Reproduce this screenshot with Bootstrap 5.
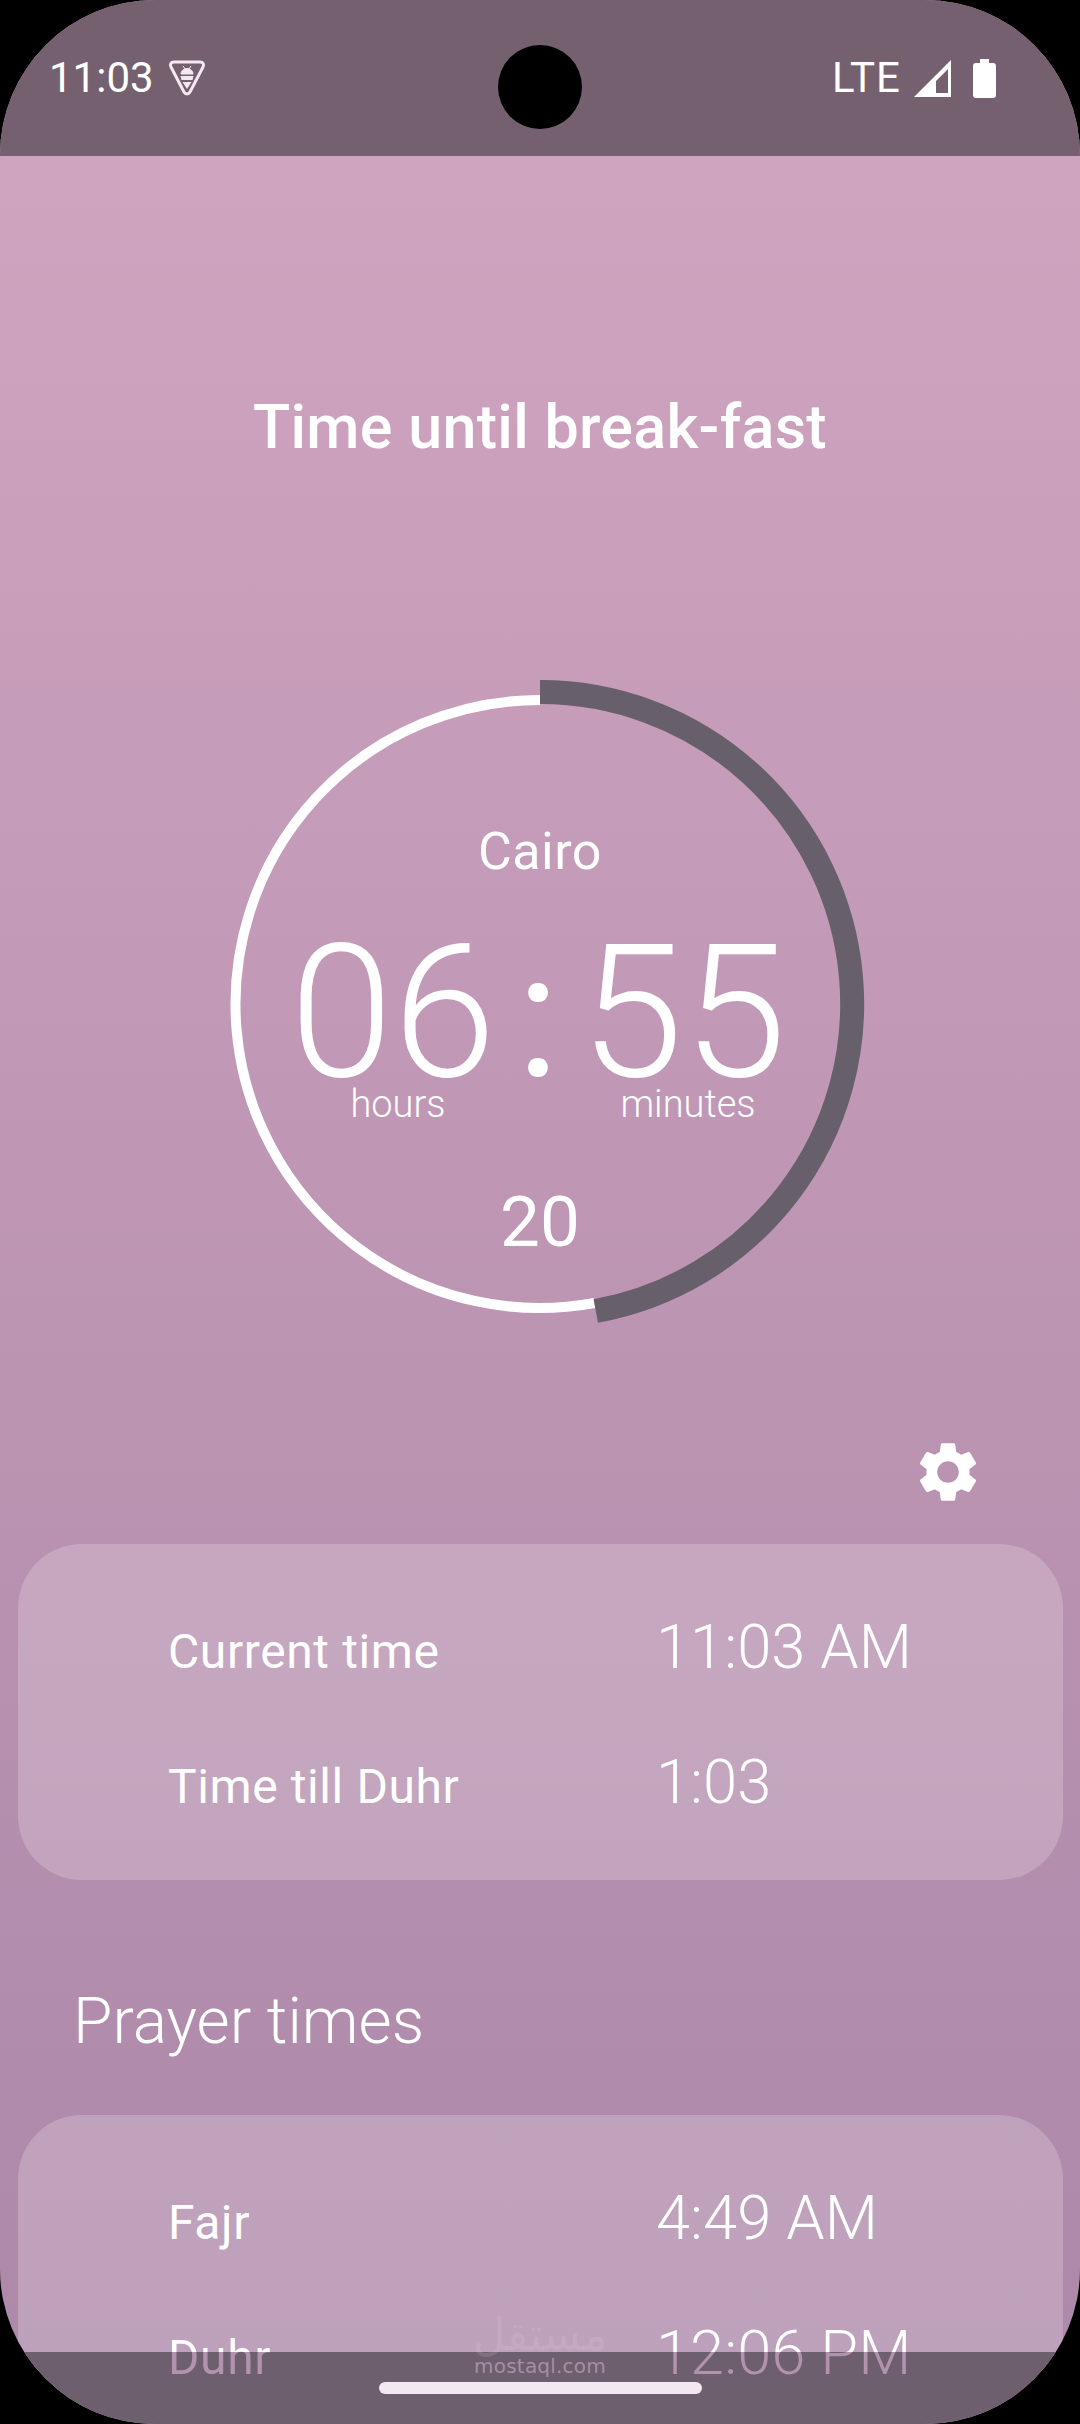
<!DOCTYPE html>
<html lang="en">
<head>
  <meta charset="UTF-8" />
  <meta name="viewport" content="width=device-width, initial-scale=1" />
  <title>Prayer Times</title>
  <link href="https://cdn.jsdelivr.net/npm/bootstrap@5.3.0/dist/css/bootstrap.min.css" rel="stylesheet">
  <style>
    html, body { height: 100%; background: #000; }
    body { font-family: Roboto, "Liberation Sans", sans-serif; color: #fff; }

    .phone-screen {
      position: relative;
      height: 2424px;
      border-radius: 155px;
      overflow: hidden;
      background: linear-gradient(180deg, #cfa4bf 156px, #b08bab 2100px, #ad89aa 2424px);
    }

    /* status bar */
    .status-bar { height: 156px; background: #75606f; padding: 0 84px 0 49px; }
    .status-clock { font-size: 42px; line-height: 1; }
    .status-net { font-size: 42px; line-height: 1; letter-spacing: 1px; }
    .status-left { gap: 14px; }
    .signal-icon { margin-left: 13px; }
    .battery-icon { margin-left: 22px; }
    .camera-hole { position: absolute; top: 45px; left: 498px; width: 84px; height: 84px; border-radius: 50%; background: #000; }

    .page-title { margin: 0; padding-top: 238px; font-size: 61px; line-height: 66px; font-weight: 500; text-align: center; letter-spacing: .3px; }

    /* countdown ring, svg and text share one grid cell */
    .ring-box { display: grid; width: 660px; height: 660px; margin: 214px auto 0; }
    .ring-box > * { grid-area: 1 / 1; }
    .ring-text { padding-top: 148px; }
    .ring-city { font-size: 52px; line-height: 60px; letter-spacing: .5px; }
    .ring-clock { font-size: 186px; line-height: 112px; font-weight: 300; margin-top: 74px; padding-right: 4px; }
    .clock-sep { width: 84px; text-align: center; font-size: 175px; font-weight: 400; }
    .ring-units { font-size: 38px; line-height: 44px; font-weight: 300; margin-top: 9px; padding-left: 6px; }
    .unit-cell { width: 208px; text-align: center; }
    .unit-gap { width: 82px; }
    .ring-secs { font-size: 71px; line-height: 80px; margin-top: 56px; }

    .gear-row { padding: 102px 96px 0 0; height: 210px; }
    .gear-row svg { width: 72px; height: 72px; display: block; }

    .time-panel { margin: 0 17px 0 18px; padding: 36px 0 30px 150px; background: rgba(255, 255, 255, .2); border-radius: 64px; }
    .time-panel.cut-off { height: 400px; }
    .time-row { height: 135px; }
    .row-label { width: 488px; font-size: 48px; letter-spacing: .6px; line-height: 135px; }
    .row-value { font-size: 61.5px; font-weight: 300; line-height: 135px; }

    /* this row runs behind the gesture bar: its text turns pink where the bar starts */
    .row-under-nav { position: relative; z-index: 2; }
    .row-under-nav span { -webkit-background-clip: text; background-clip: text; color: transparent; }
    .row-under-nav .row-label { background-image: linear-gradient(#fff 62px, #b193ae 62px); }
    .row-under-nav .row-value { background-image: linear-gradient(#fff 66px, #b193ae 66px); }

    .section-title { margin: 0; padding: 107px 0 0 73px; height: 235px; font-size: 64px; line-height: 70px; font-weight: 300; }

    /* gesture bar lies over the list */
    .nav-bar { position: absolute; left: 0; right: 0; bottom: 0; height: 72px; background: #6d5f6d; }
    .home-pill { position: absolute; left: 379px; top: 30px; width: 323px; height: 12px; border-radius: 6px; background: #f1e9ef; }
    .stamp { position: absolute; z-index: 3; left: 440px; top: 2315px; width: 200px; text-align: center; font-family: "DejaVu Sans", sans-serif; }
    .stamp-ar { font-size: 45px; line-height: 40px; color: rgba(238, 215, 232, .16); }
    .stamp-en { font-size: 20px; line-height: 22px; letter-spacing: .2px; color: rgba(238, 205, 230, .45); }
  </style>
</head>
<body>
  <div class="phone-screen">
    <div class="status-bar d-flex align-items-center justify-content-between">
      <div class="status-left d-flex align-items-center">
        <span class="status-clock">11:03</span>
        <svg width="38" height="36" viewBox="0 0 38 36">
          <path d="M6 2h26c3 0 4.500 2.500 3 5L22 32c-1.500 2.500-4.500 2.500-6 0L3 7C1.500 4.500 3 2 6 2z" fill="none" stroke="#f5e8f1" stroke-width="3"/>
          <path d="M13 14c0-3 2.500-5.500 6-5.500s6 2.500 6 5.500zM15 6l2 3M23 6l-2 3" fill="#f5e8f1" stroke="#f5e8f1" stroke-width="1"/>
          <path d="M12.500 16h13l-1 4h-11zM14.500 22h9l-4.500 7z" fill="#f5e8f1"/>
        </svg>
      </div>
      <div class="d-flex align-items-center">
        <span class="status-net">LTE</span>
        <svg class="signal-icon" width="37" height="37" viewBox="0 0 37 37">
          <path fill-rule="evenodd" d="M37 0v37H0zM34 9 22 21v12h12z" fill="#fff"/>
        </svg>
        <svg class="battery-icon" width="23" height="39" viewBox="0 0 23 39">
          <path d="M7 0h9v4h4c2 0 3 1 3 3v29c0 2-1 3-3 3H3c-2 0-3-1-3-3V7c0-2 1-3 3-3h4z" fill="#fff"/>
        </svg>
      </div>
    </div>
    <div class="camera-hole"></div>

    <h1 class="page-title">Time until break-fast</h1>

    <div class="ring-box">
      <svg width="660" height="660" viewBox="0 0 660 660">
        <path d="M384.400 629A304 304 0 1 1 330 26" fill="none" stroke="#fff" stroke-width="10"/>
        <path d="M330 18A312 312 0 0 1 385.800 637" fill="none" stroke="#67606a" stroke-width="24"/>
      </svg>
      <div class="ring-text text-center">
        <div class="ring-city">Cairo</div>
        <div class="ring-clock d-flex justify-content-center align-items-baseline">
          <span>06</span><span class="clock-sep">:</span><span>55</span>
        </div>
        <div class="ring-units d-flex justify-content-center">
          <span class="unit-cell">hours</span><span class="unit-gap"></span><span class="unit-cell">minutes</span>
        </div>
        <div class="ring-secs">20</div>
      </div>
    </div>

    <div class="gear-row d-flex justify-content-end">
      <svg viewBox="0 0 24 24" fill="#fff"><path d="M19.14 12.94c.04-.3.06-.61.06-.94 0-.32-.02-.64-.07-.94l2.03-1.58c.18-.14.23-.41.12-.61l-1.92-3.32c-.12-.22-.37-.29-.59-.22l-2.39.96c-.5-.38-1.03-.7-1.62-.94l-.36-2.54c-.04-.24-.24-.41-.48-.41h-3.84c-.24 0-.43.17-.47.41l-.36 2.54c-.59.24-1.13.57-1.62.94l-2.39-.96c-.22-.08-.47 0-.59.22L2.74 8.87c-.12.21-.08.47.12.61l2.03 1.58c-.05.3-.09.63-.09.94s.02.64.07.94l-2.03 1.58c-.18.14-.23.41-.12.61l1.92 3.32c.12.22.37.29.59.22l2.39-.96c.5.38 1.03.7 1.62.94l.36 2.54c.05.24.24.41.48.41h3.84c.24 0 .44-.17.47-.41l.36-2.54c.59-.24 1.13-.56 1.62-.94l2.39.96c.22.08.47 0 .59-.22l1.92-3.32c.12-.22.07-.47-.12-.61l-2.01-1.58zM12 15.6c-1.98 0-3.6-1.62-3.6-3.6s1.62-3.6 3.6-3.6 3.6 1.62 3.6 3.6-1.62 3.6-3.6 3.6z"/></svg>
    </div>

    <div class="time-panel">
      <div class="time-row d-flex align-items-baseline"><span class="row-label">Current time</span><span class="row-value">11:03 AM</span></div>
      <div class="time-row d-flex align-items-baseline"><span class="row-label">Time till Duhr</span><span class="row-value">1:03</span></div>
    </div>

    <h2 class="section-title">Prayer times</h2>

    <div class="time-panel cut-off">
      <div class="time-row d-flex align-items-baseline"><span class="row-label">Fajr</span><span class="row-value">4:49 AM</span></div>
      <div class="time-row row-under-nav d-flex align-items-baseline"><span class="row-label">Duhr</span><span class="row-value">12:06 PM</span></div>
    </div>

    <div class="nav-bar"><div class="home-pill"></div></div>
    <div class="stamp">
      <div class="stamp-ar" lang="ar" dir="rtl">مستقل</div>
      <div class="stamp-en">mostaql.com</div>
    </div>
  </div>
  <script src="https://cdn.jsdelivr.net/npm/bootstrap@5.3.0/dist/js/bootstrap.bundle.min.js"></script>
</body>
</html>
